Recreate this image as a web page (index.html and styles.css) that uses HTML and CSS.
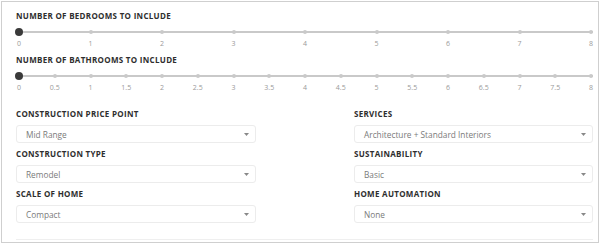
FILE: index.html
```html
<!DOCTYPE html>
<html lang="en">
<head>
    <meta charset="UTF-8">
    <meta name="viewport" content="width=device-width, initial-scale=1.0">
    <title>Home Estimate Options</title>
    <link rel="stylesheet" href="styles.css">
</head>
<body>

    <div class="panel">

        <!-- Bedrooms -->
        <div class="field-title">Number of bedrooms to include</div>
        <div class="slider">
            <div class="slider-row">
                <div class="track"></div>
                <div class="ticks">
                    <span class="tick"></span><span class="tick"></span><span class="tick"></span>
                    <span class="tick"></span><span class="tick"></span><span class="tick"></span>
                    <span class="tick"></span><span class="tick"></span><span class="tick"></span>
                </div>
                <div class="thumb"></div>
            </div>
            <div class="labels">
                <span>0</span><span>1</span><span>2</span><span>3</span><span>4</span>
                <span>5</span><span>6</span><span>7</span><span>8</span>
            </div>
        </div>

        <!-- Bathrooms -->
        <div class="field-title">Number of bathrooms to include</div>
        <div class="slider">
            <div class="slider-row">
                <div class="track"></div>
                <div class="ticks">
                    <span class="tick"></span><span class="tick"></span><span class="tick"></span>
                    <span class="tick"></span><span class="tick"></span><span class="tick"></span>
                    <span class="tick"></span><span class="tick"></span><span class="tick"></span>
                    <span class="tick"></span><span class="tick"></span><span class="tick"></span>
                    <span class="tick"></span><span class="tick"></span><span class="tick"></span>
                    <span class="tick"></span><span class="tick"></span>
                </div>
                <div class="thumb"></div>
            </div>
            <div class="labels">
                <span>0</span><span>0.5</span><span>1</span><span>1.5</span><span>2</span>
                <span>2.5</span><span>3</span><span>3.5</span><span>4</span><span>4.5</span>
                <span>5</span><span>5.5</span><span>6</span><span>6.5</span><span>7</span>
                <span>7.5</span><span>8</span>
            </div>
        </div>

        <!-- Dropdowns -->
        <div class="options">
            <div class="column">
                <div class="field">
                    <div class="field-title">Construction price point</div>
                    <div class="select">
                        <span>Mid Range</span>
                        <svg class="arrow" width="5" height="3" viewBox="0 0 5 3"><path d="M0 0h5L2.5 3z" fill="#888"/></svg>
                    </div>
                </div>
                <div class="field">
                    <div class="field-title">Construction type</div>
                    <div class="select">
                        <span>Remodel</span>
                        <svg class="arrow" width="5" height="3" viewBox="0 0 5 3"><path d="M0 0h5L2.5 3z" fill="#888"/></svg>
                    </div>
                </div>
                <div class="field">
                    <div class="field-title">Scale of home</div>
                    <div class="select">
                        <span>Compact</span>
                        <svg class="arrow" width="5" height="3" viewBox="0 0 5 3"><path d="M0 0h5L2.5 3z" fill="#888"/></svg>
                    </div>
                </div>
            </div>
            <div class="column">
                <div class="field">
                    <div class="field-title">Services</div>
                    <div class="select">
                        <span>Architecture + Standard Interiors</span>
                        <svg class="arrow" width="5" height="3" viewBox="0 0 5 3"><path d="M0 0h5L2.5 3z" fill="#888"/></svg>
                    </div>
                </div>
                <div class="field">
                    <div class="field-title">Sustainability</div>
                    <div class="select">
                        <span>Basic</span>
                        <svg class="arrow" width="5" height="3" viewBox="0 0 5 3"><path d="M0 0h5L2.5 3z" fill="#888"/></svg>
                    </div>
                </div>
                <div class="field">
                    <div class="field-title">Home automation</div>
                    <div class="select">
                        <span>None</span>
                        <svg class="arrow" width="5" height="3" viewBox="0 0 5 3"><path d="M0 0h5L2.5 3z" fill="#888"/></svg>
                    </div>
                </div>
            </div>
        </div>

        <div class="divider"></div>
    </div>

</body>
</html>
```

FILE: styles.css
```css
* {
    margin: 0;
    padding: 0;
    box-sizing: border-box;
    font-family: "Open Sans", Arial, sans-serif;
}
body {
    background-color: #ffffff;
    padding: 1px;
}
.panel {
    width: 598px;
    height: 242px;
    border: 1px solid #cfcfcf;
    padding: 9px 5px 0 14px;
    overflow: hidden;
}
.field-title {
    font-size: 8px;
    line-height: 10px;
    height: 10px;
    font-weight: 700;
    color: #2e2e2e;
    text-transform: uppercase;
    letter-spacing: 0.3px;
}
.slider {
    padding: 7px 2px 0 3px;
    margin-bottom: 7px;
}
.slider-row {
    position: relative;
    height: 8px;
    display: flex;
    align-items: center;
}
.track {
    position: absolute;
    left: 0;
    right: -2px;
    top: 3px;
    height: 2px;
    background-color: #c9c9c9;
}
.ticks {
    position: relative;
    width: 100%;
    display: flex;
    justify-content: space-between;
}
.tick {
    width: 0;
    display: flex;
    justify-content: center;
}
.tick::before {
    content: "";
    flex: none;
    width: 4px;
    height: 4px;
    border-radius: 50%;
    background-color: #c9c9c9;
}
.thumb {
    position: absolute;
    left: -4px;
    top: 0;
    width: 8px;
    height: 8px;
    border-radius: 50%;
    background-color: #3a3a3a;
}
.labels {
    margin-top: 4px;
    display: flex;
    justify-content: space-between;
    font-size: 7px;
    line-height: 8px;
    color: #9a9a9a;
}
.labels span {
    width: 0;
    display: flex;
    justify-content: center;
    white-space: nowrap;
}
.options {
    margin-top: 17px;
    display: flex;
    justify-content: space-between;
}
.column {
    display: flex;
    flex-direction: column;
}
.column:first-child {
    width: 240px;
}
.column:last-child {
    width: 239px;
}
.field {
    height: 40px;
}
.field .field-title {
    margin-bottom: 6px;
}
.select {
    height: 18px;
    border: 1px solid #ececec;
    border-radius: 3px;
    padding: 0 6px 0 9px;
    display: flex;
    align-items: center;
    justify-content: space-between;
    font-size: 8.3px;
    color: #7a7a7a;
}
.arrow {
    display: block;
}
.divider {
    margin-top: 10px;
    border-top: 1px solid #efefef;
}
```
